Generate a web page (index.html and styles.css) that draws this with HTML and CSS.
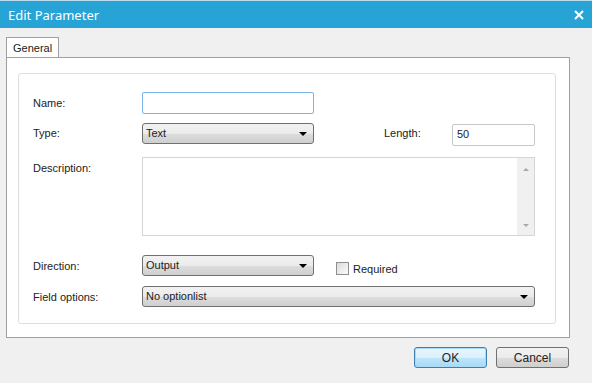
FILE: index.html
```html
<!DOCTYPE html>
<html lang="en">
  <head>
    <meta charset="UTF-8" />
    <title>Edit Parameter</title>
    <link rel="stylesheet" href="styles.css">
  </head>
  <body>
    <div class="dialog">
      <div class="titlebar">
        <span class="title">Edit Parameter</span>
        <svg class="close" width="10" height="10" viewBox="0 0 10 10">
          <path d="M1 1 L9 9 M9 1 L1 9" stroke="#fff" stroke-width="2" />
        </svg>
      </div>
      <div class="tabs">
        <div class="tab">General</div>
      </div>
      <div class="panel">
        <div class="group">
          <div class="row row-name">
            <label class="label" for="name">Name:</label>
            <input type="text" id="name" class="input input-focus" />
          </div>
          <div class="row row-type">
            <label class="label">Type:</label>
            <div class="select select-short"><span>Text</span><i class="arrow"></i></div>
            <label class="label label-length" for="length">Length:</label>
            <input type="text" id="length" class="input input-length" value="50" />
          </div>
          <div class="row row-desc">
            <label class="label label-top" for="desc">Description:</label>
            <div class="textarea">
              <div class="scrollbar">
                <i class="sarrow up"></i>
                <i class="sarrow down"></i>
              </div>
            </div>
          </div>
          <div class="row row-dir">
            <label class="label">Direction:</label>
            <div class="select select-short"><span>Output</span><i class="arrow"></i></div>
            <label class="check"><span class="box"></span>Required</label>
          </div>
          <div class="row row-field">
            <label class="label">Field options:</label>
            <div class="select select-long"><span>No optionlist</span><i class="arrow"></i></div>
          </div>
        </div>
      </div>
      <div class="buttons">
        <button class="btn btn-ok">OK</button>
        <button class="btn">Cancel</button>
      </div>
    </div>
  </body>
</html>
```

FILE: styles.css
```css
* {
  box-sizing: border-box;
  margin: 0;
  padding: 0;
}

body {
  font-family: "Liberation Sans", Arial, sans-serif;
  font-size: 11px;
  color: #222;
  background-color: #f0f0f0;
  width: 592px;
  height: 383px;
  overflow: hidden;
}

.titlebar {
  height: 28px;
  background-color: #27a3d6;
  border-top: 1px solid #b9dcef;
  display: flex;
  align-items: center;
  justify-content: space-between;
  padding: 0 8px 0 8px;
  color: #fff;
}

.title {
  font-family: "Noto Sans", sans-serif;
  font-size: 13px;
}

.close {
  display: block;
}

.tabs {
  display: flex;
  padding: 9px 0 0 6px;
  height: 29px;
}

.tab {
  position: relative;
  z-index: 1;
  width: 53px;
  height: 20px;
  background-color: #fff;
  border: 1px solid #a0a0a0;
  border-bottom: none;
  padding: 4px 0 0 6px;
}

.panel {
  margin-left: 6px;
  width: 564px;
  height: 281px;
  background-color: #fff;
  border: 1px solid #a0a0a0;
  padding: 15px 12px 0 11px;
}

.group {
  width: 538px;
  height: 251px;
  border: 1px solid #dcdfe2;
  border-radius: 3px;
  padding: 18px 0 0 14px;
}

.row {
  display: flex;
  align-items: center;
}

.label {
  width: 109px;
  flex-shrink: 0;
}

.input {
  height: 22px;
  border: 1px solid #c8c8c8;
  border-radius: 2px;
  font: inherit;
  padding: 0 4px;
  background-color: #fff;
  color: #222;
}

.input-focus {
  width: 172px;
  border-color: #7eb4ea;
}

.row-type {
  margin-top: 9px;
  align-items: flex-start;
}

.row-type .label {
  margin-top: 4px;
}

.label-length {
  width: 68px;
  margin-left: 70px;
}

.input-length {
  width: 83px;
  margin-top: 1px;
  padding-bottom: 3px;
}

.select {
  position: relative;
  height: 21px;
  border: 1px solid #707070;
  border-radius: 3px;
  background: linear-gradient(#f2f2f2 0%, #ebebeb 50%, #dddddd 51%, #cfcfcf 100%);
  padding: 3px 0 0 3px;
}

.select-short {
  width: 172px;
}

.select-long {
  width: 393px;
}

.arrow {
  position: absolute;
  right: 6px;
  top: 8px;
  border-left: 4px solid transparent;
  border-right: 4px solid transparent;
  border-top: 4px solid #000;
}

.row-desc {
  margin-top: 11px;
  align-items: flex-start;
}

.label-top {
  margin-top: 5px;
}

.textarea {
  width: 393px;
  height: 79px;
  border: 1px solid #d5d5d5;
  display: flex;
  justify-content: flex-end;
  background-color: #fff;
}

.scrollbar {
  width: 17px;
  background-color: #f0f0f0;
  display: flex;
  flex-direction: column;
  justify-content: space-between;
  align-items: center;
  padding: 10px 0 8px;
}

.sarrow {
  border-left: 3px solid transparent;
  border-right: 3px solid transparent;
}

.sarrow.up {
  border-bottom: 3px solid #a8a8a8;
}

.sarrow.down {
  border-top: 3px solid #a8a8a8;
}

.row-dir {
  margin-top: 19px;
}

.check {
  display: flex;
  align-items: center;
  margin: 6px 0 0 22px;
}

.box {
  width: 13px;
  height: 13px;
  border: 1px solid #8f8f8f;
  background: linear-gradient(135deg, #dcdcdc, #fbfbfb);
  margin-right: 4px;
}

.row-field {
  margin-top: 10px;
}

.buttons {
  display: flex;
  justify-content: flex-end;
  gap: 9px;
  padding: 9px 23px 0 0;
}

.btn {
  width: 73px;
  height: 21px;
  font: inherit;
  font-size: 12px;
  color: #222;
  border: 1px solid #707070;
  border-radius: 3px;
  background: linear-gradient(#f2f2f2 0%, #ebebeb 50%, #dddddd 51%, #cfcfcf 100%);
}

.btn-ok {
  border-color: #3c7fb1;
  box-shadow: inset 0 0 0 1px #a8dcf6;
  background: linear-gradient(#eaf6fd 0%, #d9f0fc 50%, #bee6fd 51%, #a7d9f5 100%);
}
```
